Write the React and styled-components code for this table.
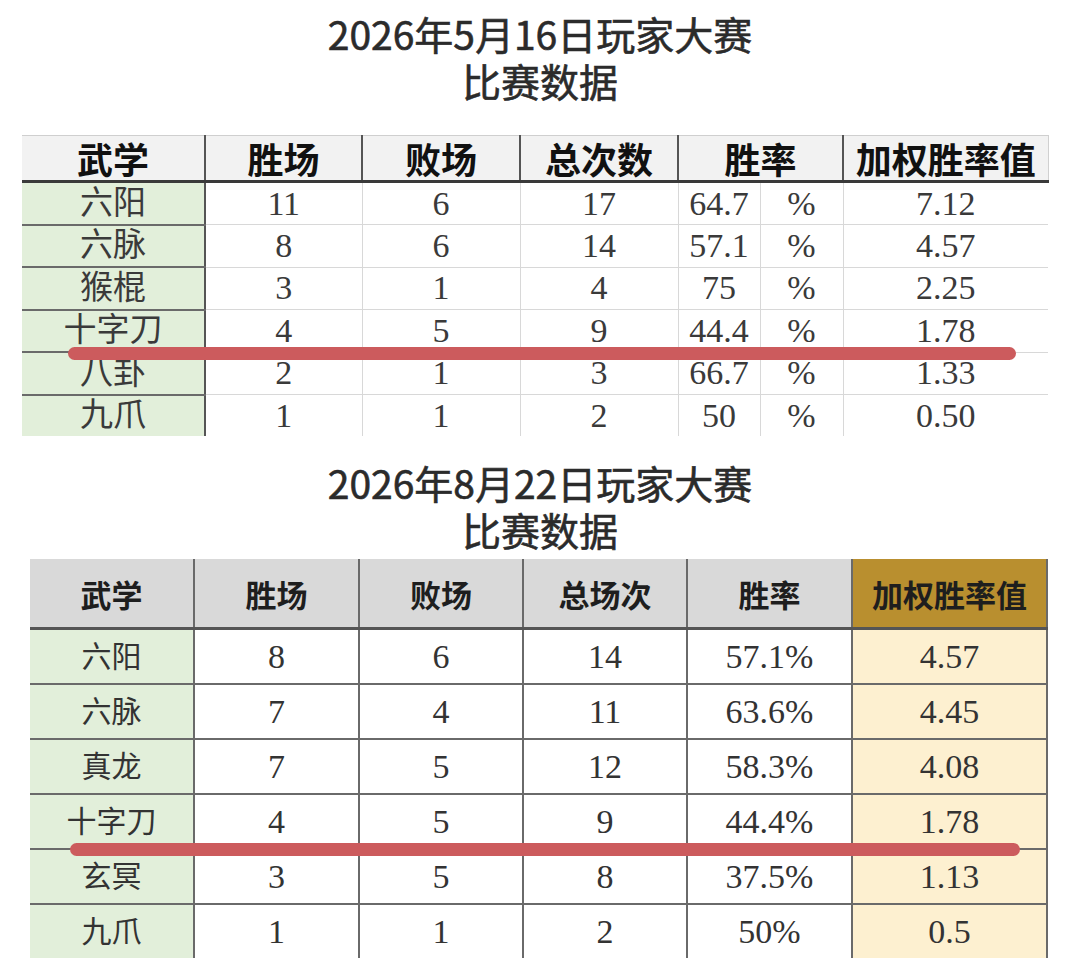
import React from 'react'
import styled, { createGlobalStyle, css } from 'styled-components'

const GlobalStyle = createGlobalStyle`
  body {
    margin: 0;
    background: #fff;
    font-family: "Noto Sans CJK SC", sans-serif;
  }
`

const Page = styled.div`
  width: 1080px;
  padding-top: 10px;
  padding-bottom: 12px;
`

const Title = styled.h1`
  margin: ${p => p.$gap || 0}px 0 0;
  text-align: center;
  font-family: "Noto Sans CJK SC", sans-serif;
  font-weight: 400;
  font-size: 39px;
  line-height: 47px;
  color: #2b2b2b;
  -webkit-text-stroke: 0.6px #2b2b2b;
`

const Board = styled.div`
  position: relative;
  margin-left: ${p => p.$left}px;
  margin-top: ${p => p.$gap}px;
  width: ${p => p.$width}px;
`

/* red marker stroke drawn over the sheet */
const Strike = styled.div`
  position: absolute;
  left: ${p => p.$left}px;
  top: ${p => p.$top}px;
  width: ${p => p.$width}px;
  height: 13px;
  border-radius: 7px;
  background: #cc5b5d;
`

const Sheet = styled.table`
  border-collapse: collapse;
  table-layout: fixed;
  width: 100%;
  font-family: "Liberation Serif", "Noto Sans CJK SC", serif;
`

/* ---------- first sheet ---------- */

const HeadA = styled.th`
  height: 44px;
  padding: 0;
  background: #f2f2f2;
  font-family: "Noto Sans CJK SC", sans-serif;
  font-weight: 700;
  font-size: 36px;
  line-height: 1;
  color: #111;
  border-top: 1px solid #cfcfcf;
  border-bottom: 3px solid #3a3a3a;
  border-left: 2px solid #555;
  &:first-child { border-left: none; }
  &:last-child { border-right: 1px solid #d0d0d0; }
`

const CellA = styled.td`
  height: 40.5px;
  padding: 0;
  text-align: center;
  font-size: 34px;
  line-height: 1;
  color: #3a3a3a;
  border-bottom: 1px solid #d8d8d8;
  border-left: 1px solid #d8d8d8;
  ${p => p.$name && css`
    background: #e2efda;
    font-size: 33px;
    border-left: none;
    border-right: 2px solid #555;
    border-bottom: 2px solid #6a6a6a;
  `}
  tr:last-child > & { border-bottom: none; }
`

/* ---------- second sheet ---------- */

const HeadB = styled.th`
  height: 68px;
  padding: 0;
  background: ${p => (p.$gold ? '#b98f2f' : '#d9d9d9')};
  font-family: "Noto Sans CJK SC", sans-serif;
  font-weight: 600;
  font-size: 31px;
  line-height: 1;
  color: #1e1e1e;
  border-bottom: 3px solid #555;
  border-left: 2px solid #6a6a6a;
  &:first-child { border-left: none; }
  &:last-child { border-right: 2px solid #6a6a6a; }
`

const CellB = styled.td`
  height: 53px;
  padding: 0;
  text-align: center;
  font-size: 34px;
  line-height: 1;
  color: #333;
  border-bottom: 2px solid #6a6a6a;
  border-left: 2px solid #6a6a6a;
  ${p => p.$name && css`
    background: #e2efda;
    font-size: 30px;
    border-left: none;
  `}
  ${p => p.$cream && css`
    background: #fdf0d0;
    border-right: 2px solid #6a6a6a;
  `}
  tr:last-child > & { border-bottom: none; }
`

const mayRows = [
  ['六阳', '11', '6', '17', '64.7', '7.12'],
  ['六脉', '8', '6', '14', '57.1', '4.57'],
  ['猴棍', '3', '1', '4', '75', '2.25'],
  ['十字刀', '4', '5', '9', '44.4', '1.78'],
  ['八卦', '2', '1', '3', '66.7', '1.33'],
  ['九爪', '1', '1', '2', '50', '0.50'],
]

const augRows = [
  ['六阳', '8', '6', '14', '57.1%', '4.57'],
  ['六脉', '7', '4', '11', '63.6%', '4.45'],
  ['真龙', '7', '5', '12', '58.3%', '4.08'],
  ['十字刀', '4', '5', '9', '44.4%', '1.78'],
  ['玄冥', '3', '5', '8', '37.5%', '1.13'],
  ['九爪', '1', '1', '2', '50%', '0.5'],
]

const MaySheet = () => (
  <Board $left={22} $gap={31} $width={1026}>
    <Sheet>
      <colgroup>
        <col style={{ width: 183 }} />
        <col style={{ width: 157 }} />
        <col style={{ width: 158 }} />
        <col style={{ width: 158 }} />
        <col style={{ width: 82 }} />
        <col style={{ width: 83 }} />
        <col style={{ width: 205 }} />
      </colgroup>
      <thead>
        <tr>
          <HeadA>武学</HeadA>
          <HeadA>胜场</HeadA>
          <HeadA>败场</HeadA>
          <HeadA>总次数</HeadA>
          <HeadA colSpan={2}>胜率</HeadA>
          <HeadA>加权胜率值</HeadA>
        </tr>
      </thead>
      <tbody>
        {mayRows.map(r => (
          <tr key={r[0]}>
            <CellA $name>{r[0]}</CellA>
            <CellA>{r[1]}</CellA>
            <CellA>{r[2]}</CellA>
            <CellA>{r[3]}</CellA>
            <CellA>{r[4]}</CellA>
            <CellA>%</CellA>
            <CellA>{r[5]}</CellA>
          </tr>
        ))}
      </tbody>
    </Sheet>
    <Strike $left={46} $top={212} $width={948} />
  </Board>
)

const AugSheet = () => (
  <Board $left={30} $gap={6} $width={1017}>
    <Sheet>
      <colgroup>
        <col style={{ width: 164 }} />
        <col style={{ width: 165 }} />
        <col style={{ width: 164 }} />
        <col style={{ width: 164 }} />
        <col style={{ width: 165 }} />
        <col style={{ width: 195 }} />
      </colgroup>
      <thead>
        <tr>
          <HeadB>武学</HeadB>
          <HeadB>胜场</HeadB>
          <HeadB>败场</HeadB>
          <HeadB>总场次</HeadB>
          <HeadB>胜率</HeadB>
          <HeadB $gold>加权胜率值</HeadB>
        </tr>
      </thead>
      <tbody>
        {augRows.map(r => (
          <tr key={r[0]}>
            <CellB $name>{r[0]}</CellB>
            <CellB>{r[1]}</CellB>
            <CellB>{r[2]}</CellB>
            <CellB>{r[3]}</CellB>
            <CellB>{r[4]}</CellB>
            <CellB $cream>{r[5]}</CellB>
          </tr>
        ))}
      </tbody>
    </Sheet>
    <Strike $left={40} $top={284} $width={950} />
  </Board>
)

export default function App() {
  return (
    <Page>
      <GlobalStyle />
      <Title>
        2026年5月16日玩家大赛
        <br />
        比赛数据
      </Title>
      <MaySheet />
      <Title $gap={23}>
        2026年8月22日玩家大赛
        <br />
        比赛数据
      </Title>
      <AugSheet />
    </Page>
  )
}
